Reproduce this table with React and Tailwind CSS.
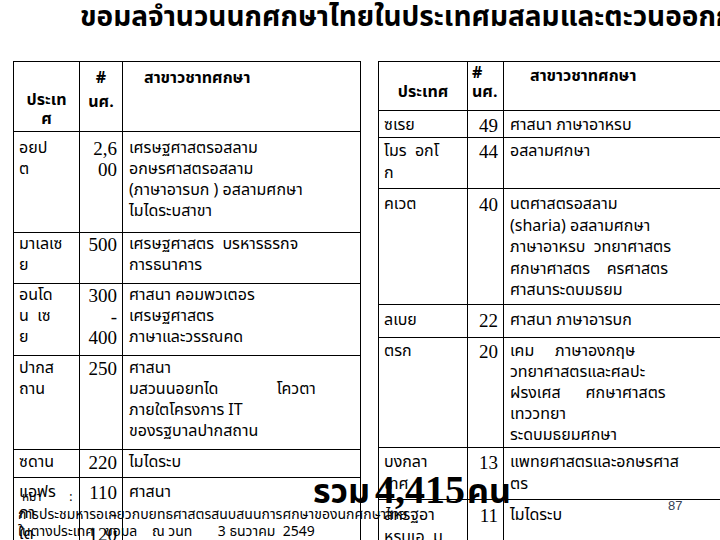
import React from 'react';

const thai = "font-[Tahoma,'Noto_Sans_Thai',Loma,Garuda,'DejaVu_Sans',sans-serif]";
const serif = "font-['Liberation_Serif','Times_New_Roman',serif]";

const leftRows = [
  { h: 'h-[99px]', pt: 'pt-[6px]', country: ['อยป', 'ต'], num: ['2,6', '00'], subj: ['เศรษฐศาสตรอสลาม', 'อกษรศาสตรอสลาม', '(ภาษาอารบก ) อสลามศกษา', 'ไมไดระบสาขา'] },
  { h: 'h-[49px]', pt: 'pt-[1px]', country: ['มาเลเซ', 'ย'], num: ['500'], subj: ['เศรษฐศาสตร  บรหารธรกจ', 'การธนาคาร'] },
  { h: 'h-[70px]', pt: 'pt-[1px]', country: ['อนโด', 'น  เซ', 'ย'], num: ['300', '-', '400'], subj: ['ศาสนา คอมพวเตอร', 'เศรษฐศาสตร', 'ภาษาและวรรณคด'] },
  { h: 'h-[92px]', pt: 'pt-[2px]', country: ['ปากส', 'ถาน'], num: ['250'], subj: ['ศาสนา', 'มสวนนอยทได              โควตา', 'ภายใตโครงการ IT', 'ของรฐบาลปากสถาน'] },
  { h: 'h-[27px]', pt: 'pt-[2px]', country: ['ซดาน'], num: ['220'], subj: ['ไมไดระบ'] },
  { h: 'h-[80px]', pt: 'pt-[4px]', country: ['แอฟร', 'กา', 'ใต'], num: ['110', '-', '120'], subj: ['ศาสนา'] },
];

const rightRows = [
  { h: 'h-[27px]', pt: 'pt-[4px]', lead: 'leading-[21.5px]', country: ['ซเรย'], num: ['49'], subj: ['ศาสนา ภาษาอาหรบ'] },
  { h: 'h-[51px]', pt: 'pt-[3px]', lead: 'leading-[21.5px]', country: ['โมร  อกโ', 'ก'], num: ['44'], subj: ['อสลามศกษา'] },
  { h: 'h-[116px]', pt: 'pt-[5px]', lead: 'leading-[21.5px]', country: ['คเวต'], num: ['40'], subj: ['นตศาสตรอสลาม', '(sharia) อสลามศกษา', 'ภาษาอาหรบ  วทยาศาสตร', 'ศกษาศาสตร    ครศาสตร', 'ศาสนาระดบมธยม'] },
  { h: 'h-[33px]', pt: 'pt-[5px]', lead: 'leading-[21.5px]', country: ['ลเบย'], num: ['22'], subj: ['ศาสนา ภาษาอารบก'] },
  { h: 'h-[110px]', pt: 'pt-[3px]', lead: 'leading-[21px]', country: ['ตรก'], num: ['20'], subj: ['เคม     ภาษาองกฤษ', 'วทยาศาสตรและศลปะ', 'ฝรงเศส      ศกษาศาสตร', 'เทววทยา', 'ระดบมธยมศกษา'] },
  { h: 'h-[52px]', pt: 'pt-[4px]', lead: 'leading-[21.5px]', country: ['บงกลา', 'เทศ'], num: ['13'], subj: ['แพทยศาสตรและอกษรศาส', 'ตร'] },
  { h: 'h-[60px]', pt: 'pt-[5px]', lead: 'leading-[21.5px]', country: ['สหรฐอา', 'หรบเอ  ม'], num: ['11'], subj: ['ไมไดระบ'] },
];

function Lines({ items }) {
  return items.map((t, i) => <div key={i} className="whitespace-pre">{t || '\u00a0'}</div>);
}

function DataTable({ rows, width, cols, header }) {
  return (
    <table className={`table-fixed border-collapse border border-black shrink-0 ${width}`}>
      <colgroup>
        {cols.map((c, i) => <col key={i} className={c} />)}
      </colgroup>
      <tbody>
        {header}
        {rows.map((r, i) => {
          const lead = r.lead || 'leading-[21px]';
          return (
            <tr key={i} className={r.h}>
              <td className={`border border-black align-top pl-[5px] ${r.pt} ${lead} text-[16px] ${thai}`}>
                <Lines items={r.country} />
              </td>
              <td className={`border border-black align-top text-right pr-[5px] ${r.pt} ${lead} text-[19px] ${serif}`}>
                <Lines items={r.num} />
              </td>
              <td className={`border border-black align-top pl-[6px] ${r.pt} ${lead} text-[16px] overflow-hidden ${thai}`}>
                <Lines items={r.subj} />
              </td>
            </tr>
          );
        })}
      </tbody>
    </table>
  );
}

export default function App() {
  const leftHeader = (
    <tr className={`h-[68px] font-bold text-[16px] ${thai}`}>
      <td className="border border-black align-top text-center pt-[29px] leading-[19px]">
        <Lines items={['ประเท', 'ศ']} />
      </td>
      <td className="border border-black align-top text-center pt-[4px] leading-[24px]">
        <Lines items={['#', 'นศ.']} />
      </td>
      <td className="border border-black align-top pl-[21px] pt-[6px] leading-[21px]">
        <Lines items={['สาขาวชาทศกษา']} />
      </td>
    </tr>
  );

  const rightHeader = (
    <tr className={`h-[49px] font-bold text-[16px] ${thai}`}>
      <td className="border border-black align-top text-center pt-[2px] leading-[19px]">
        <Lines items={['', 'ประเทศ']} />
      </td>
      <td className="border border-black align-top pl-[4px] pt-[2px] leading-[19px]">
        <Lines items={['#', 'นศ.']} />
      </td>
      <td className="border border-black align-top pl-[26px] pt-[5px] leading-[19px]">
        <Lines items={['สาขาวชาทศกษา']} />
      </td>
    </tr>
  );

  return (
    <div className="relative w-[720px] h-[540px] overflow-hidden bg-white text-black">
      <h1 className={`h-[61px] pl-[80px] pt-[1px] whitespace-nowrap text-[28px] leading-[34px] font-bold ${thai}`}>
        ขอมลจำนวนนกศกษาไทยในประเทศมสลมและตะวนออกกลาง
      </h1>

      <div className="flex gap-[17px] pl-[13px]">
        <DataTable rows={leftRows} width="w-[347px]" cols={['w-[66px]', 'w-[43px]', 'w-[238px]']} header={leftHeader} />
        <DataTable rows={rightRows} width="w-[365px]" cols={['w-[89px]', 'w-[36px]', 'w-[240px]']} header={rightHeader} />
      </div>

      {/* total, drawn over the tables */}
      <div className="absolute left-[313px] top-[470px] flex items-baseline gap-[5px] whitespace-nowrap font-bold leading-none">
        <span className={`text-[34px] ${thai}`}>รวม</span>
        <span className={`text-[40px] ${serif}`}>4,415</span>
        <span className={`text-[34px] -ml-[3px] ${thai}`}>คน</span>
      </div>

      {/* footnote */}
      <div className={`absolute left-[22px] top-[490px] text-[12px] leading-[14px] whitespace-pre ${thai}`}>
        หมา         :
      </div>
      <div className={`absolute left-[18px] top-[506px] text-[14px] leading-[17px] whitespace-pre ${thai}`}>
        <div>การประชมหารอเกยวกบยทธศาสตรสนบสนนการศกษาของนกศกษาไทย</div>
        <div>ในตางประเทศ   ขอมล    ณ วนท       3 ธนวาคม  2549</div>
      </div>

      <div className="absolute left-[668px] top-[496px] text-[13px] text-gray-700 font-['Liberation_Sans',Arial,sans-serif]">
        87
      </div>
    </div>
  );
}
